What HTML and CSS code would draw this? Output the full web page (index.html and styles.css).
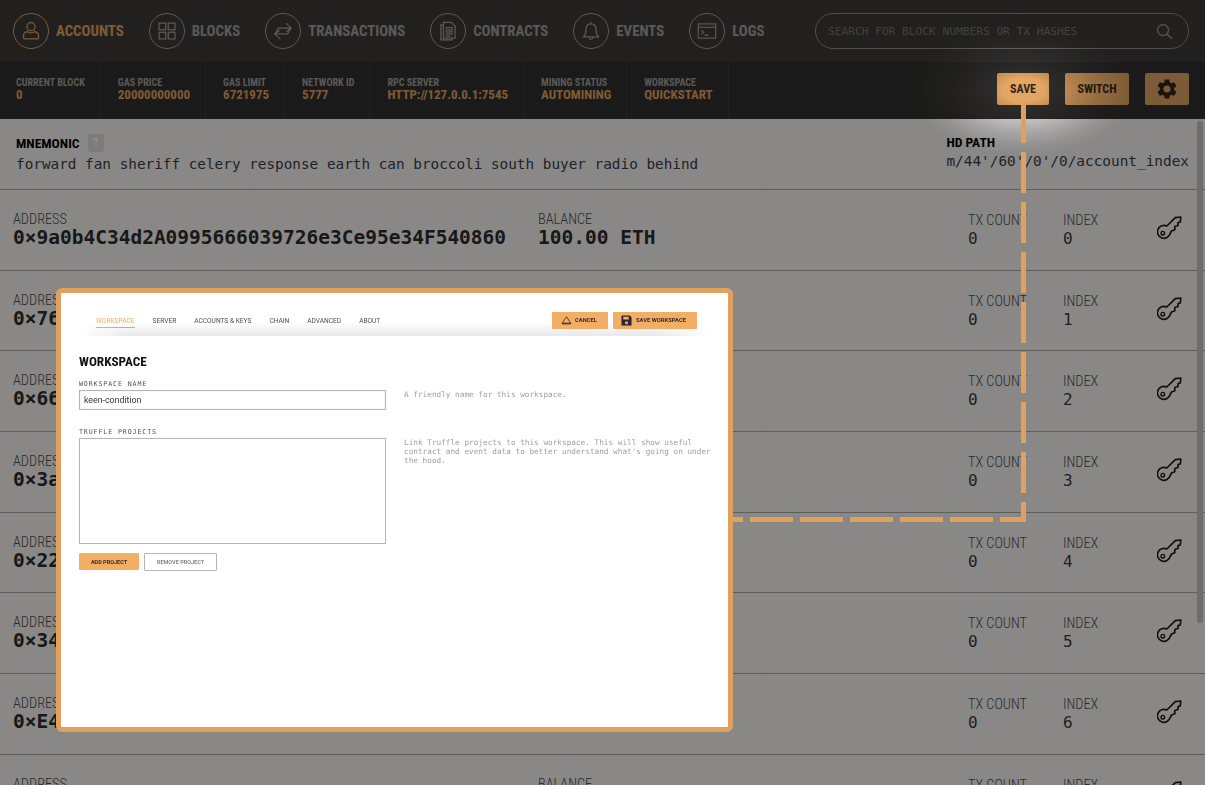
FILE: index.html
```html
<!DOCTYPE html>
<html lang="en">
<head>
<meta charset="utf-8">
<title>Ganache</title>
<link rel="stylesheet" href="styles.css">
</head>
<body>
<div class="app">
  <svg class="defs" width="0" height="0" aria-hidden="true">
    <symbol id="key" viewBox="0 0 25 24">
      <path d="M23.800 1 L18.300 1.600 L9.800 10 A6.500 6.500 0 1 0 13.200 17.600 L14.500 15 L17.800 13.800 V10.500 L21 9.500 V6.600 L23.300 6 Z" fill="none" stroke="currentColor" stroke-width="1.700" stroke-linejoin="round"/>
      <circle cx="5.800" cy="17.200" r="1.800" fill="none" stroke="currentColor" stroke-width="1.400"/>
    </symbol>
  </svg>

  <header class="top">
    <nav class="nav">
      <a class="nav-item active">
        <span class="ring"><svg viewBox="0 0 24 24" fill="none" stroke="currentColor" stroke-width="1.500"><circle cx="12" cy="6.800" r="4.800"/><path d="M7.800 12.800 C4.500 13.300 3 15 3 17.500 V20 A1.500 1.500 0 0 0 4.500 21.500 H19.500 A1.500 1.500 0 0 0 21 20 V17.500 C21 15 19.500 13.300 16.200 12.800 C14 14.300 10 14.300 7.800 12.800 Z"/></svg></span>
        <span class="nav-label">ACCOUNTS</span>
      </a>
      <a class="nav-item">
        <span class="ring"><svg viewBox="0 0 24 24" fill="none" stroke="currentColor" stroke-width="1.500"><rect x="2.500" y="2.500" width="8" height="8"/><rect x="13.500" y="2.500" width="8" height="8"/><rect x="2.500" y="13.500" width="8" height="8"/><rect x="13.500" y="13.500" width="8" height="8"/></svg></span>
        <span class="nav-label">BLOCKS</span>
      </a>
      <a class="nav-item">
        <span class="ring"><svg viewBox="0 0 24 24" fill="none" stroke="currentColor" stroke-width="1.400"><path d="M15.500 2.500 L22 8.500 L16 13 M22 8.500 H6.500 L2.500 15.500"/><path d="M9 22 L2 15.500 L8 11 M2 15.500 H17.500 L21.500 8.500"/></svg></span>
        <span class="nav-label">TRANSACTIONS</span>
      </a>
      <a class="nav-item">
        <span class="ring"><svg viewBox="0 0 24 24" fill="none" stroke="currentColor" stroke-width="1.500"><path d="M6 4.500 H3.500 V22.500 H17 V20.500"/><path d="M6.500 1.500 H16 L20.500 6 V20.500 H6.500 Z"/><path d="M9 8 H18 M9 10.500 H18 M9 13 H18 M9 15.500 H18 M9 18 H15"/></svg></span>
        <span class="nav-label">CONTRACTS</span>
      </a>
      <a class="nav-item">
        <span class="ring"><svg viewBox="0 0 24 24" fill="none" stroke="currentColor" stroke-width="1.500"><path d="M12 1.500 V3.500 M12 3.500 C7.500 3.500 6 7 6 10.500 C6 15 5 17 3 19 H21 C19 17 18 15 18 10.500 C18 7 16.500 3.500 12 3.500 Z"/><path d="M9.500 19.500 C10 23 14 23 14.500 19.500"/></svg></span>
        <span class="nav-label">EVENTS</span>
      </a>
      <a class="nav-item">
        <span class="ring"><svg viewBox="0 0 24 24" fill="none" stroke="currentColor" stroke-width="1.400"><rect x="1.500" y="3.500" width="21" height="17"/><path d="M1.500 7.500 H22.500"/><path d="M5 11 L8 13.500 L5 16 M9 17 H14"/></svg></span>
        <span class="nav-label">LOGS</span>
      </a>
    </nav>
    <div class="search">
      <span class="search-text">SEARCH FOR BLOCK NUMBERS OR TX HASHES</span>
      <svg viewBox="0 0 18 18" width="17" height="17" fill="none" stroke="currentColor" stroke-width="1.700"><circle cx="7.500" cy="7.500" r="5.800"/><path d="M11.800 11.800 L17 17"/></svg>
    </div>
  </header>

  <section class="status">
    <div class="stat"><span class="stat-k">CURRENT BLOCK</span><span class="stat-v">0</span></div>
    <div class="stat"><span class="stat-k">GAS PRICE</span><span class="stat-v">20000000000</span></div>
    <div class="stat"><span class="stat-k">GAS LIMIT</span><span class="stat-v">6721975</span></div>
    <div class="stat"><span class="stat-k">NETWORK ID</span><span class="stat-v">5777</span></div>
    <div class="stat"><span class="stat-k">RPC SERVER</span><span class="stat-v">HTTP://127.0.0.1:7545</span></div>
    <div class="stat"><span class="stat-k">MINING STATUS</span><span class="stat-v">AUTOMINING</span></div>
    <div class="stat"><span class="stat-k">WORKSPACE</span><span class="stat-v">QUICKSTART</span></div>
    <div class="actions">
      <button class="act act-save">SAVE</button>
      <button class="act act-switch">SWITCH</button>
      <button class="act act-gear" aria-label="Settings"><svg viewBox="0 0 24 24" width="24" height="24"><path fill="#33251b" d="M19.140 12.940c.04-.3.06-.61.06-.94 0-.32-.02-.64-.07-.94l2.030-1.580a.49.49 0 0 0 .12-.61l-1.920-3.320a.488.488 0 0 0-.59-.22l-2.390.96c-.5-.38-1.030-.7-1.620-.94l-.36-2.540a.484.484 0 0 0-.48-.41h-3.840c-.24 0-.43.17-.47.41l-.36 2.540c-.59.24-1.130.57-1.620.94l-2.390-.96c-.22-.08-.47 0-.59.22L2.740 8.870c-.12.21-.08.47.12.61l2.030 1.580c-.05.3-.09.63-.09.94s.02.64.07.94l-2.030 1.580a.49.49 0 0 0-.12.61l1.920 3.320c.12.22.37.29.59.22l2.390-.96c.5.38 1.030.7 1.620.94l.36 2.540c.05.24.24.41.48.41h3.840c.24 0 .44-.17.47-.41l.36-2.540c.59-.24 1.130-.56 1.620-.94l2.390.96c.22.08.47 0 .59-.22l1.920-3.320c.12-.22.07-.47-.12-.61l-2.010-1.580zM12 15.600c-1.980 0-3.600-1.620-3.600-3.600s1.620-3.600 3.600-3.600 3.600 1.620 3.600 3.600-1.620 3.600-3.600 3.600z"/></svg></button>
    </div>
  </section>

  <main class="main">
    <section class="mnemonic">
      <div class="mn-left">
        <div class="mn-title">MNEMONIC <span class="help">?</span></div>
        <div class="mn-words">forward fan sheriff celery response earth can broccoli south buyer radio behind</div>
      </div>
      <div class="mn-right">
        <div class="mn-title">HD PATH</div>
        <div class="mn-path">m/44'/60'/0'/0/account_index</div>
      </div>
    </section>

    <div class="row">
      <div class="c-addr"><span class="k">ADDRESS</span><span class="addr">0×9a0b4C34d2A0995666039726e3Ce95e34F540860</span></div>
      <div class="c-bal"><span class="k">BALANCE</span><span class="addr">100.00 ETH</span></div>
      <div class="c-tx"><span class="k">TX COUNT</span><span class="num">0</span></div>
      <div class="c-idx"><span class="k">INDEX</span><span class="num">0</span></div>
      <svg class="key"><use href="#key"/></svg>
    </div>
    <div class="row">
      <div class="c-addr"><span class="k">ADDRESS</span><span class="addr">0×7611E4b3b5a5DE6A2b8E4F6c5E2B90c1d7F3a214</span></div>
      <div class="c-bal"><span class="k">BALANCE</span><span class="addr">100.00 ETH</span></div>
      <div class="c-tx"><span class="k">TX COUNT</span><span class="num">0</span></div>
      <div class="c-idx"><span class="k">INDEX</span><span class="num">1</span></div>
      <svg class="key"><use href="#key"/></svg>
    </div>
    <div class="row">
      <div class="c-addr"><span class="k">ADDRESS</span><span class="addr">0×66e0a4B9c3F1d27E85aC4b6D09f7E3a1C2d8B745</span></div>
      <div class="c-bal"><span class="k">BALANCE</span><span class="addr">100.00 ETH</span></div>
      <div class="c-tx"><span class="k">TX COUNT</span><span class="num">0</span></div>
      <div class="c-idx"><span class="k">INDEX</span><span class="num">2</span></div>
      <svg class="key"><use href="#key"/></svg>
    </div>
    <div class="row">
      <div class="c-addr"><span class="k">ADDRESS</span><span class="addr">0×3a91dC47B0e2F58a6D1c9E3b7A04f82C6e5D19b3</span></div>
      <div class="c-bal"><span class="k">BALANCE</span><span class="addr">100.00 ETH</span></div>
      <div class="c-tx"><span class="k">TX COUNT</span><span class="num">0</span></div>
      <div class="c-idx"><span class="k">INDEX</span><span class="num">3</span></div>
      <svg class="key"><use href="#key"/></svg>
    </div>
    <div class="row">
      <div class="c-addr"><span class="k">ADDRESS</span><span class="addr">0×22b7E05d9A3c1F46e8B2D7a0C5f93E16d4A8c07F</span></div>
      <div class="c-bal"><span class="k">BALANCE</span><span class="addr">100.00 ETH</span></div>
      <div class="c-tx"><span class="k">TX COUNT</span><span class="num">0</span></div>
      <div class="c-idx"><span class="k">INDEX</span><span class="num">4</span></div>
      <svg class="key"><use href="#key"/></svg>
    </div>
    <div class="row">
      <div class="c-addr"><span class="k">ADDRESS</span><span class="addr">0×34F8a1c6D09e7B25d3A4E8f1C7b06a92D5e3F18c</span></div>
      <div class="c-bal"><span class="k">BALANCE</span><span class="addr">100.00 ETH</span></div>
      <div class="c-tx"><span class="k">TX COUNT</span><span class="num">0</span></div>
      <div class="c-idx"><span class="k">INDEX</span><span class="num">5</span></div>
      <svg class="key"><use href="#key"/></svg>
    </div>
    <div class="row">
      <div class="c-addr"><span class="k">ADDRESS</span><span class="addr">0×E47c2B9a05D1f3e68A7d4C0b2F96e18D3a5B7c42</span></div>
      <div class="c-bal"><span class="k">BALANCE</span><span class="addr">100.00 ETH</span></div>
      <div class="c-tx"><span class="k">TX COUNT</span><span class="num">0</span></div>
      <div class="c-idx"><span class="k">INDEX</span><span class="num">6</span></div>
      <svg class="key"><use href="#key"/></svg>
    </div>
    <div class="row">
      <div class="c-addr"><span class="k">ADDRESS</span><span class="addr">0×91d3A6e7C2b08F45a1E9c7D3f06B82e4C1a5D793</span></div>
      <div class="c-bal"><span class="k">BALANCE</span><span class="addr">100.00 ETH</span></div>
      <div class="c-tx"><span class="k">TX COUNT</span><span class="num">0</span></div>
      <div class="c-idx"><span class="k">INDEX</span><span class="num">7</span></div>
      <svg class="key"><use href="#key"/></svg>
    </div>
  </main>

  <div class="scrollbar"></div>
  <div class="dim"></div>

  <svg class="connector" width="1205" height="785" aria-hidden="true">
    <path class="dash-h" d="M700 519.500 H1026"/>
    <path class="dash-v" d="M1023.500 522 V102"/>
  </svg>

  <div class="modal">
    <div class="m-top">
      <nav class="m-nav">
        <span class="m-tab on">WORKSPACE</span>
        <span class="m-tab">SERVER</span>
        <span class="m-tab">ACCOUNTS &amp; KEYS</span>
        <span class="m-tab">CHAIN</span>
        <span class="m-tab">ADVANCED</span>
        <span class="m-tab">ABOUT</span>
      </nav>
      <div class="m-actions">
        <button class="m-btn m-cancel"><svg viewBox="0 0 12 10" width="11" height="9"><path d="M6 .8 L11 8.500 H1 Z" fill="none" stroke="#3a2a2e" stroke-width=".9"/><path d="M1 7 H11 V9.500 H1 Z" fill="#3a2a2e" opacity=".45"/></svg>CANCEL</button>
        <button class="m-btn m-save"><svg viewBox="0 0 12 12" width="11" height="11"><path fill="#2f2433" fill-rule="evenodd" d="M1 .5 H9.500 L11.500 2.500 V11.500 H.5 V1 Z M2.500 1.800 V4.800 H8.500 V1.800 Z M6 6.800 A1.700 1.700 0 1 0 6 10.200 A1.700 1.700 0 1 0 6 6.800 Z"/></svg>SAVE WORKSPACE</button>
      </div>
    </div>
    <div class="m-body">
      <h2 class="m-h">WORKSPACE</h2>
      <div class="m-group m-group-name">
        <div class="m-field">
          <label class="m-label">WORKSPACE NAME</label>
          <div class="m-input">keen-condition</div>
        </div>
        <p class="m-help m-help-name">A friendly name for this workspace.</p>
      </div>
      <div class="m-group">
        <div class="m-field">
          <label class="m-label">TRUFFLE PROJECTS</label>
          <div class="m-area"></div>
          <div class="m-btns">
            <button class="m-add">ADD PROJECT</button>
            <button class="m-remove">REMOVE PROJECT</button>
          </div>
        </div>
        <p class="m-help m-help-truffle">Link Truffle projects to this workspace. This will show useful contract and event data to better understand what's going on under the hood.</p>
      </div>
    </div>
  </div>
</div>
</body>
</html>
```

FILE: styles.css
```css
* { box-sizing: border-box; }
html, body { margin: 0; height: 100%; overflow: hidden; }
body { background: #f9f8f6; font-family: "Roboto Condensed", "Liberation Sans Narrow", Roboto, sans-serif; }
.app { position: relative; width: 1205px; height: 785px; overflow: hidden; }
.defs { position: absolute; }

.top { height: 62px; background: #3d3b39; display: flex; align-items: center; justify-content: space-between; padding: 0 16px 0 13px; color: #a5a3a0; }
.nav { display: flex; align-items: center; gap: 25px; }
.nav-item { display: flex; align-items: center; gap: 7px; }
.nav-item.active { color: #e4a663; }
.ring { width: 36px; height: 36px; border: 1.5px solid currentColor; border-radius: 50%; display: flex; align-items: center; justify-content: center; }
.ring svg { width: 20px; height: 20px; }
.nav-label { font-size: 14.800px; font-weight: 700; }
.search { width: 374px; height: 36px; border: 1px solid #8f8d8a; border-radius: 18px; display: flex; align-items: center; justify-content: space-between; padding: 0 15px 0 12px; color: #8f8d8a; }
.search-text { font: 11.200px "DejaVu Sans Mono", monospace; color: #77756f; }

.status { height: 57px; background: #31302f; display: flex; align-items: stretch; }
.stat { padding: 15px 15px 0 17px; border-right: 1px solid #3e3d3b; display: flex; flex-direction: column; color: #a5a39f; }
.stat:first-child { padding-left: 16px; }
.stat-k { font-size: 10.100px; font-weight: 700; line-height: 12px; }
.stat-v { font-size: 13px; font-weight: 700; line-height: 12px; color: #e4a663; }
.actions { margin-left: auto; display: flex; align-items: flex-start; gap: 16px; padding: 11px 16px 0 0; }
.act { height: 32px; border: 0; border-radius: 2px; background: #e4a663; color: #33251b; font: 700 12px "Roboto Condensed", "Liberation Sans Narrow", Roboto, sans-serif; padding: 0; display: flex; align-items: center; justify-content: center; }
.act-save { width: 52px; }
.act-switch { width: 64px; }
.act-gear { width: 44px; }

.main { background: #f9f8f6; }
.mnemonic { height: 71px; border-bottom: 1px solid #aaa; display: flex; justify-content: space-between; padding: 15px 16px 0 16px; }
.mn-title { font-size: 13.600px; font-weight: 700; line-height: 18px; color: #000; display: flex; align-items: center; gap: 8px; }
.help { width: 16px; height: 18px; border-radius: 3px; background: #e2e1df; color: #fff; font-size: 12px; display: flex; align-items: center; justify-content: center; }
.mn-words, .mn-path { font: 14.350px "DejaVu Sans Mono", monospace; line-height: 18px; color: #3a3d4a; }
.mn-words { margin-top: 3px; }
.mn-right { margin-top: -1px; }
.mn-path { margin-top: 1px; font-size: 14.400px; }

.row { height: 80.700px; display: grid; grid-template-columns: 525px 430px 95px 1fr; align-items: start; border-bottom: 1px solid #aaa; padding: 22px 23px 0 13px; position: relative; color: #2b2b2b; }
.k { display: block; font-size: 14.300px; font-weight: 300; line-height: 15px; color: #4e4e4c; }
.addr { display: block; font: 700 19.500px/21px "DejaVu Sans Mono", monospace; color: #2c2c2c; white-space: nowrap; }
.c-tx, .c-idx { margin-top: 1px; }
.num { display: block; font: 16px/19px "DejaVu Sans Mono", monospace; color: #3a3a3a; margin-top: 1px; }
.key { position: absolute; right: 23px; top: 26px; width: 25px; height: 24px; color: #1c1c1c; }
.row:last-child { border-bottom: 0; }

.scrollbar { position: absolute; left: 1197px; top: 121px; width: 6px; height: 502px; border-radius: 3px; background: #c7c6c4; }
.dim { position: absolute; inset: 0; background: radial-gradient(110px 65px at 1023px 90px, rgba(0,0,0,0) 18%, rgba(0,0,0,.12) 30%, rgba(0,0,0,.22) 45%, rgba(0,0,0,.33) 65%, rgba(0,0,0,.41) 85%, rgba(0,0,0,.45) 100%); }

.connector { position: absolute; left: 0; top: 0; }
.dash-h, .dash-v { fill: none; stroke: #e0a15e; stroke-width: 5; }
.dash-h { stroke-dasharray: 43 7; }
.dash-v { stroke-dasharray: 41 9; stroke-dashoffset: 21; }

.modal { position: absolute; left: 56px; top: 288px; width: 677px; height: 444px; background: #fff; border: 5px solid #e0a15e; border-radius: 6px; overflow: hidden; }
.m-top { position: relative; height: 43px; margin: 0 18px; display: flex; justify-content: space-between; align-items: center; padding: 11px 13px 0 17px; filter: blur(.3px); }
.m-top::after { content: ""; position: absolute; left: 0; right: 0; bottom: 0; height: 14px; background: linear-gradient(to bottom, rgba(0,0,0,0), rgba(0,0,0,.09)); -webkit-mask-image: linear-gradient(to right, transparent, #000 8%, #000 92%, transparent); mask-image: linear-gradient(to right, transparent, #000 8%, #000 92%, transparent); pointer-events: none; }
.m-nav { display: flex; gap: 18px; align-items: center; margin-top: 4px; }
.m-tab { font: 6.600px Roboto, sans-serif; color: #4b4f5c; line-height: 9px; padding-bottom: 1px; border-bottom: 1px solid transparent; }
.m-tab.on { color: #efab62; border-bottom-color: #efab62; }
.m-actions { display: flex; gap: 5px; position: relative; z-index: 1; }
.m-btn { height: 17px; background: #f3ae65; border: 0; border-radius: 1px; display: flex; align-items: center; justify-content: flex-start; font: 700 5.800px Roboto, sans-serif; color: #3a2a2e; }
.m-cancel { width: 56px; gap: 3px; padding: 0 0 0 9px; }
.m-save { width: 84px; gap: 4px; padding: 0 0 0 8px; }
.m-body { padding: 17.500px 0 0 18px; filter: blur(.25px); }
.m-h { margin: 0 0 10.500px; font: 700 13.200px/16px "Roboto Condensed", "Liberation Sans Narrow", Roboto, sans-serif; color: #111; }
.m-group { display: flex; gap: 18px; align-items: flex-start; }
.m-group-name { height: 48px; }
.m-field { width: 307px; }
.m-label { display: block; font: 6.600px/8px "DejaVu Sans Mono", monospace; letter-spacing: .9px; color: #4b4f5c; margin-bottom: 2px; }
.m-input { height: 20px; border: 1px solid #b5b5b5; box-shadow: inset 0 0 1px #bbb; font: 8.800px/18px Roboto, sans-serif; padding-left: 4px; color: #333640; }
.m-area { height: 106px; border: 1px solid #b5b5b5; }
.m-help { margin: 0; width: 313px; font: 7.730px/9px "DejaVu Sans Mono", monospace; color: #a0a0a0; }
.m-help-name { padding-top: 9.500px; }
.m-help-truffle { padding-top: 10px; }
.m-btns { display: flex; gap: 5px; margin-top: 9px; }
.m-add { width: 60px; height: 17px; background: #f3ae65; border: 0; border-radius: 1px; font: 700 5.500px Roboto, sans-serif; color: #3a2a2e; padding: 0; }
.m-remove { width: 73px; height: 18px; background: #fff; border: 1px solid #b5b5b5; border-radius: 1px; font: 700 5.500px Roboto, sans-serif; color: #888; padding: 0; }
```
